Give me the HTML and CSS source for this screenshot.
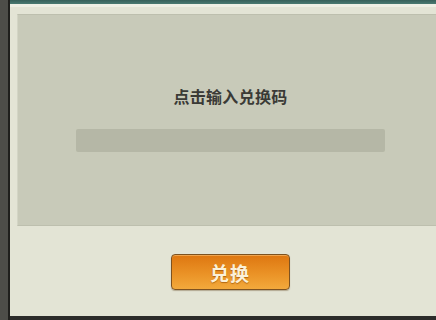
FILE: index.html
```html
<!DOCTYPE html>
<html lang="zh-CN">
<head>
<meta charset="utf-8">
<link rel="stylesheet" href="styles.css">
</head>
<body>
<div class="screen">
  <div class="left-edge"></div>
  <div class="main">
    <div class="top-bar"></div>
    <div class="frame">
      <div class="panel">
        <div class="title">点击输入兑换码</div>
        <div class="code-input"></div>
      </div>
      <div class="actions">
        <button class="redeem">兑换</button>
      </div>
    </div>
    <div class="bottom-bar"></div>
  </div>
</div>
</body>
</html>
```

FILE: styles.css
```css
html, body {
  margin: 0;
  padding: 0;
  width: 436px;
  height: 320px;
  overflow: hidden;
  background: #2a2a28;
}
.screen {
  display: flex;
  width: 436px;
  height: 320px;
  overflow: hidden;
  font-family: "Noto Sans CJK SC", "Noto Sans", sans-serif;
}
.left-edge {
  flex: 0 0 8px;
  background: #4d4d49;
  border-right: 2px solid #1f1f1d;
}
.main {
  flex: 0 0 433px;
  display: flex;
  flex-direction: column;
}
.top-bar {
  height: 4px;
  background: linear-gradient(#365f59, #4a7a71);
}
.frame {
  flex: 1;
  background: #e3e4d5;
  border-top: 3px solid #eeefe4;
  padding: 7px 0 0 7px;
  display: flex;
  flex-direction: column;
}
.panel {
  height: 210px;
  background: #c8cab9;
  border: 1px solid #bdbfae;
  border-left-color: #d3d5c5;
  border-right: none;
  display: flex;
  flex-direction: column;
  align-items: center;
}
.title {
  margin-top: 70px;
  font-size: 16px;
  font-weight: 700;
  color: #3a3a36;
  line-height: 22px;
  letter-spacing: 0.3px;
}
.code-input {
  margin-top: 22px;
  width: 309px;
  height: 23px;
  background: #b5b7a6;
  border-radius: 2px;
}
.actions {
  display: flex;
  justify-content: center;
  padding-top: 28px;
}
.redeem {
  width: 119px;
  height: 36px;
  padding: 0;
  border: 1px solid #7d5220;
  border-radius: 4px;
  background: linear-gradient(#de7610, #ea9226 55%, #f2a93c);
  box-shadow: inset 0 1px 0 rgba(255, 210, 140, 0.5), 0 1px 1px rgba(90, 60, 20, 0.35);
  color: #fbf1d9;
  font-family: "Noto Sans CJK SC", "Noto Sans", sans-serif;
  font-size: 19px;
  font-weight: 700;
  letter-spacing: 1px;
  text-shadow: 0 1px 1px rgba(140, 70, 0, 0.6);
}
.bottom-bar {
  height: 4px;
  background: #2c2c2a;
}
```
